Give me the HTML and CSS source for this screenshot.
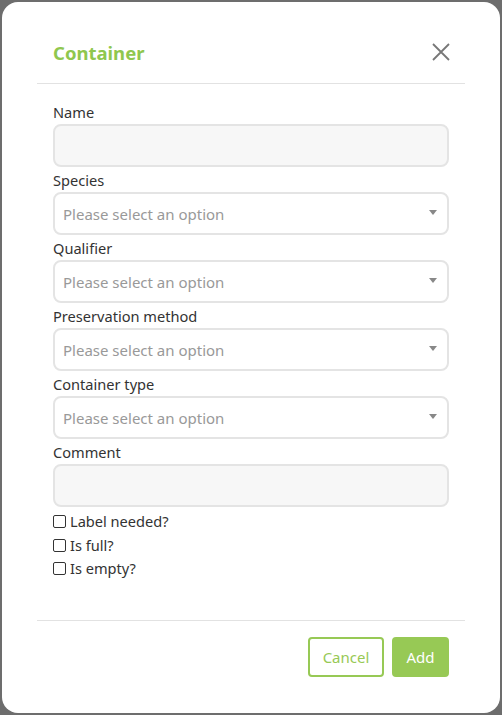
FILE: index.html
```html
<!DOCTYPE html>
<html>
<head>
<meta charset="utf-8">
<link rel="stylesheet" href="styles.css">
</head>
<body>
<div class="modal">
  <div class="header">
    <h1 class="title">Container</h1>
    <button class="close" aria-label="Close">
      <svg width="18" height="18" viewBox="0 0 18 18"><path d="M1 1 L17 17 M17 1 L1 17" stroke="#777" stroke-width="1.8" fill="none"/></svg>
    </button>
  </div>
  <div class="body">
    <div class="field">
      <label class="label">Name</label>
      <div class="input"></div>
    </div>
    <div class="field">
      <label class="label">Species</label>
      <div class="input select"><span class="ph">Please select an option</span><span class="arrow"></span></div>
    </div>
    <div class="field">
      <label class="label">Qualifier</label>
      <div class="input select"><span class="ph">Please select an option</span><span class="arrow"></span></div>
    </div>
    <div class="field">
      <label class="label">Preservation method</label>
      <div class="input select"><span class="ph">Please select an option</span><span class="arrow"></span></div>
    </div>
    <div class="field">
      <label class="label">Container type</label>
      <div class="input select"><span class="ph">Please select an option</span><span class="arrow"></span></div>
    </div>
    <div class="field">
      <label class="label">Comment</label>
      <div class="input"></div>
    </div>
    <div class="checks">
      <label class="check"><span class="box"></span>Label needed?</label>
      <label class="check"><span class="box"></span>Is full?</label>
      <label class="check"><span class="box"></span>Is empty?</label>
    </div>
  </div>
  <div class="footer">
    <button class="btn btn-outline">Cancel</button>
    <button class="btn btn-primary">Add</button>
  </div>
</div>
</body>
</html>
```
FILE: styles.css
```css
html, body {
  margin: 0;
  padding: 0;
  height: 100%;
}
body {
  background: #6d6d6d;
  font-family: "Noto Sans", "Open Sans", sans-serif;
  color: #333;
  padding: 2px;
  box-sizing: border-box;
}
.modal {
  background: #fff;
  border-radius: 16px;
  height: 711px;
  box-sizing: border-box;
  padding: 0 35px;
  display: flex;
  flex-direction: column;
}
.header {
  display: flex;
  align-items: center;
  justify-content: space-between;
  height: 82px;
  box-sizing: border-box;
  border-bottom: 1px solid #e2e2e2;
  padding: 20px 16px 0 16px;
}
.title {
  margin: 0;
  font-size: 18.5px;
  font-weight: 700;
  color: #8fc74e;
}
.close {
  background: none;
  border: 0;
  padding: 0;
  width: 18px;
  height: 18px;
  display: block;
  margin-right: -1px;
  margin-bottom: 1px;
}
.close svg { display: block; }
.body {
  padding: 18px 16px 0;
  flex: 1;
}
.field {
  display: flex;
  flex-direction: column;
  margin-bottom: 3px;
}
.label {
  font-size: 14.6px;
  line-height: 20px;
  height: 22px;
  color: #333;
}
.input {
  height: 43px;
  box-sizing: border-box;
  border: 2px solid #e4e4e4;
  border-radius: 8px;
  background: #f7f7f7;
  display: flex;
  align-items: center;
  padding: 0 10px 0 8px;
}
.select {
  background: #fff;
  justify-content: space-between;
}
.ph {
  font-size: 15px;
  color: #999;
}
.arrow {
  width: 0;
  height: 0;
  border-left: 4px solid transparent;
  border-right: 4px solid transparent;
  border-top: 5px solid #888;
  margin-bottom: 3px;
}
.checks {
  display: flex;
  flex-direction: column;
  margin-top: 0;
}
.check {
  display: flex;
  align-items: center;
  font-size: 14.6px;
  line-height: 23.5px;
  color: #333;
}
.box {
  width: 13px;
  height: 13px;
  border: 1px solid #333;
  border-radius: 2px;
  margin-right: 4px;
  box-sizing: border-box;
}
.footer {
  border-top: 1px solid #e2e2e2;
  height: 93px;
  box-sizing: border-box;
  display: flex;
  justify-content: flex-end;
  align-items: flex-start;
  padding: 16px 16px 0;
  gap: 8px;
}
.btn {
  font-family: "Noto Sans", "Open Sans", sans-serif;
  font-size: 15px;
  height: 40px;
  border-radius: 4px;
  box-sizing: border-box;
  padding: 0 12px;
  cursor: pointer;
}
.btn-outline {
  background: #fff;
  border: 2px solid #97c955;
  color: #97c955;
  width: 76px;
}
.btn-primary {
  background: #97c955;
  border: 2px solid #97c955;
  color: #fff;
  width: 57px;
}
```
